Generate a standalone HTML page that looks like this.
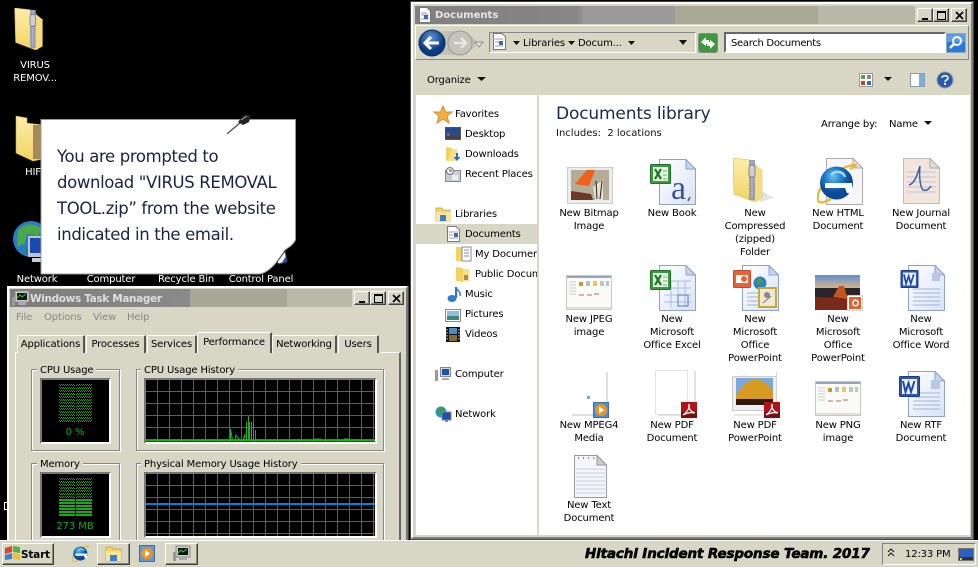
<!DOCTYPE html>
<html><head><meta charset="utf-8"><title>Documents</title>
<style>
html,body{margin:0;padding:0;background:#000;width:978px;height:567px;overflow:hidden}
body{position:relative;font:10px/13px "DejaVu Sans","Liberation Sans",sans-serif;color:#000;letter-spacing:-.14px}
div,span,svg{position:absolute;box-sizing:border-box}
svg{overflow:visible}
.t{white-space:nowrap}
.l{width:82px;text-align:center;line-height:13px}
.w{color:#fff;text-align:center;width:80px}
.btn{background:#d8d7c5;border:1px solid;border-color:#fff #404040 #404040 #fff;box-shadow:inset -1px -1px 0 #848484}
.b{width:16px;height:14px;background:#d8d7c5;border:1px solid;border-color:#fff #404040 #404040 #fff;box-shadow:inset -1px -1px 0 #848484}
.tab{background:#d8d7c5;border:1px solid #fff;border-right:2px solid #555;border-bottom:0;top:335px;height:18px;text-align:center;line-height:17px;border-radius:2px 2px 0 0}
.grp{border:1px solid #888;box-shadow:1px 1px 0 #fff,inset 1px 1px 0 #fff}
.cap{background:#d8d7c5;padding:0 3px;line-height:12px;white-space:nowrap}
.lcd{background:#000;border:2px solid;border-color:#777 #fff #fff #777}
.gr{background:#000;border:2px solid;border-color:#777 #fff #fff #777}
.g{color:#1aa81a;text-align:center;width:70px;left:40px;font-size:10px;letter-spacing:-.1px}
</style></head><body>
<svg width="0" height="0" style="left:0;top:0">
<defs>
<linearGradient id="doc" x1="0" y1="0" x2="1" y2="1"><stop offset="0" stop-color="#fff"/><stop offset="1" stop-color="#d8e2f6"/></linearGradient>
<linearGradient id="fo" x1="0" y1="0" x2="0" y2="1"><stop offset="0" stop-color="#fdeeaa"/><stop offset="1" stop-color="#f2d263"/></linearGradient>
<linearGradient id="sky" x1="0" y1="0" x2="0" y2="1"><stop offset="0" stop-color="#5d8fd0"/><stop offset="1" stop-color="#d6b28a"/></linearGradient>
<radialGradient id="ie" cx=".4" cy=".3"><stop offset="0" stop-color="#6cc4f0"/><stop offset=".55" stop-color="#1c78c8"/><stop offset="1" stop-color="#0a4a98"/></radialGradient>
<radialGradient id="bk" cx=".45" cy=".3"><stop offset="0" stop-color="#5e96d8"/><stop offset="1" stop-color="#0b3b80"/></radialGradient>
<pattern id="dot" width="2" height="3" patternUnits="userSpaceOnUse"><rect width="1" height="1" fill="#1aa01a"/><rect x="1" y="1" width="1" height="1" fill="#1aa01a"/></pattern>
<symbol id="d" viewBox="0 0 37 46"><path d="M.5 .5H27L36.5 10V45.5H.5Z" fill="url(#doc)" stroke="#8fa3c8"/><path d="M27 .5V10H36.5Z" fill="#c5d3ee" stroke="#8fa3c8"/></symbol>
<symbol id="zip" viewBox="0 0 30 44"><path d="M0 0L17 2V5L29 12V40L22 44L1 36Z" fill="url(#fo)" stroke="#d8b858" stroke-width=".6"/><path d="M22 6L29 12V40L22 44Z" fill="#f6dc7c"/><rect x="16" y="2" width="6" height="40" fill="#98a0ae"/><path d="M19 4V40" stroke="#d8dce4" stroke-dasharray="1 1"/><rect x="16" y="7" width="6" height="12" rx="2" fill="#c9ced8" stroke="#667" stroke-width=".7"/></symbol>
<symbol id="xl" viewBox="0 0 21 20"><rect x=".5" y=".5" width="20" height="19" rx="1" fill="#3a9a44" stroke="#1f6e2a"/><rect x="3" y="3" width="15" height="14" fill="#e8f5e0"/><path d="M5 5L11 15M11 5L5 15" stroke="#1d7a2a" stroke-width="2.2"/><path d="M13 7h4M13 11h4M13 15h4" stroke="#6ab06a"/></symbol>
<symbol id="wd" viewBox="0 0 21 21"><rect x=".5" y=".5" width="20" height="20" rx="1" fill="#2f55b0" stroke="#1c3a86"/><rect x="3" y="3" width="15" height="15" fill="#eef2fb"/><path d="M4 5L6.5 16L9.5 7L12 16L15.5 5" fill="none" stroke="#1f4aa8" stroke-width="2"/></symbol>
<symbol id="pdf" viewBox="0 0 16 16"><rect width="16" height="16" fill="#b01218"/><rect y="10" width="16" height="6" fill="#7d0c10"/><path d="M2 13C6 10 9 6 8 2C7 6 10 10 14 11C10 10 6 11 2 13Z" fill="none" stroke="#fff" stroke-width="1.2"/></symbol>
<symbol id="shot" viewBox="0 0 46 35"><rect x=".5" y=".5" width="45" height="34" fill="#fafaf6" stroke="#c8c8bc"/><rect x="1" y="1" width="44" height="2" fill="#98a4be"/><rect x="1" y="32" width="44" height="2" fill="#dde0d2"/><path d="M3 7h7M3 10h7M3 13h7M3 16h7M3 19h7" stroke="#ccc"/><rect x="13" y="7" width="4" height="4" fill="#c9953a"/><rect x="20" y="6" width="4" height="5" fill="#a8c2de"/><rect x="27" y="6" width="4" height="5" fill="#e8c85a"/><rect x="34" y="6" width="4" height="5" fill="#c4c4c4"/><rect x="40" y="6" width="3" height="5" fill="#a8cccc"/><path d="M13 20h5M21 20h5M28 19h5" stroke="#b66"/></symbol>
<symbol id="ppt" viewBox="0 0 16 16"><rect x=".5" y=".5" width="15" height="15" rx="1" fill="#fff" stroke="#d8d0c8"/><rect x="2" y="2" width="12" height="12" fill="#e0622c"/><circle cx="8.5" cy="8" r="3.5" fill="#fff"/><circle cx="8.5" cy="8" r="2" fill="#e0622c"/></symbol>
<symbol id="e" viewBox="0 0 40 42"><path d="M1 37C-2 28 14 8 32 3C36 2 39 1 39 3" fill="none" stroke="#e8b838" stroke-width="2.4"/><circle cx="19.500" cy="20" r="16.500" fill="url(#ie)"/><path d="M1 37C2 42 10 38 14 36" fill="none" stroke="#e8b838" stroke-width="2.4"/><path d="M8 20H35V25H8Z" fill="#fff"/><path d="M28 25H36L35 31L30 30Z" fill="#fff"/><path d="M14 12C18 7 26 8 28 14" fill="none" stroke="#a8dcf6" stroke-width="2.400"/><path d="M33 6C37 4 39 3 39 5" stroke="#e8b838" fill="none" stroke-width="2"/></symbol>
</defs></svg>

<!-- desktop -->
<svg style="left:14px;top:8px" width="30" height="42"><use href="#zip" width="30" height="42"/></svg>
<div class="w t" style="left:-5px;top:59px;line-height:13px">VIRUS<br>REMOV...</div>
<svg style="left:15px;top:115px" width="28" height="46" viewBox="0 0 28 46"><path d="M1 1L12 3V8L28 10V44L18 46L1 38Z" fill="url(#fo)" stroke="#c8a850" stroke-width=".6"/><rect x="18" y="10" width="10" height="34" fill="#a88a58"/></svg>
<div class="w t" style="left:-7px;top:166px">HIF</div>
<svg style="left:13px;top:221px" width="30" height="44" viewBox="0 0 30 44"><circle cx="18" cy="18" r="18" fill="#2a7cc8"/><path d="M5 10C11 1 24 2 28 8L25 15L14 13L12 22L4 26Z" fill="#4aa84a"/><path d="M12 26L22 30L18 36L12 32Z" fill="#2a8a3a"/><rect x="15" y="15" width="15" height="21" fill="#b8c4d8"/><rect x="17" y="17" width="13" height="15" fill="#1a4ab0"/><rect x="19" y="37" width="11" height="4" fill="#ccc"/></svg>
<div class="w t" style="left:-3px;top:273px">Network</div>
<div class="w t" style="left:71px;top:273px">Computer</div>
<div class="w t" style="left:146px;top:273px">Recycle Bin</div>
<div class="w t" style="left:221px;top:273px">Control Panel</div>
<div style="left:4px;top:502px;width:3px;height:8px;border:1px solid #fff;border-right:0"></div>

<!-- sticky note -->
<svg style="left:0;top:0" width="320" height="290">
<path d="M41 119.500H295.500V240C293 245 289 247 285 250C278 261 270 272 260 274H41Z" fill="#fff" stroke="#9a9a9a"/>
<path d="M277 262L285 251L287 261L279 264Z" fill="#fff" stroke="#444"/><path d="M281 264L286 256L287 262Z" fill="#2a50a0"/>
<path d="M227 134L241 122" stroke="#555" stroke-width="1.4"/><path d="M238 122L244 115H251L249 122L243 125Z" fill="#222"/><path d="M241 120L247 116" stroke="#aaa"/>
</svg>
<div class="t" id="note" style="left:57px;top:144px;font:16.5px/26px 'DejaVu Sans','Liberation Sans',sans-serif;color:#1c2340;letter-spacing:-.36px">You are prompted to<br>download "VIRUS REMOVAL<br>TOOL.zip” from the website<br>indicated in the email.</div>

<!-- Task Manager -->
<div style="left:7px;top:286px;width:401px;height:270px;background:#d8d7c5;border:2px solid #fff;border-right-color:#777;box-shadow:1px 0 0 #444"></div>
<div style="left:10px;top:289px;width:342px;height:18px;background:linear-gradient(90deg,#7c7c7c 0,#8a8a8a 180px,#a8a898 180px,#a8a898 277px,#b9b9aa 277px)"></div>
<svg style="left:12px;top:291px" width="17" height="15" viewBox="0 0 17 15"><rect x="3" y="0" width="14" height="11" fill="#ccc" stroke="#888"/><rect x="5" y="2" width="10" height="7" fill="#111"/><path d="M5 7L8 4L10 6L14 3" stroke="#3c3" fill="none"/><rect y="6" width="3" height="9" fill="#999"/><rect x="6" y="11" width="8" height="3" fill="#aaa"/></svg>
<div class="t" style="left:30px;top:292px;font-weight:bold;font-size:10.500px;line-height:15px;color:#dedede;letter-spacing:-.35px">Windows Task Manager</div>
<div class="b" style="left:354px;top:291px"><span style="left:4px;top:9px;width:6px;height:2px;background:#000"></span></div>
<div class="b" style="left:370px;top:291px"><span style="left:3px;top:2px;width:9px;height:9px;border:1px solid #000;border-top-width:2px"></span></div>
<div class="b" style="left:388px;top:291px"><svg style="left:3px;top:2px" width="9" height="9"><path d="M1 1L8 8M8 1L1 8" stroke="#000" stroke-width="1.6"/></svg></div>
<div class="t" style="left:16px;top:311px;color:#888">File</div>
<div class="t" style="left:44px;top:311px;color:#888">Options</div>
<div class="t" style="left:93px;top:311px;color:#888">View</div>
<div class="t" style="left:127px;top:311px;color:#888">Help</div>
<div style="left:15px;top:352px;width:386px;height:200px;border:1px solid #fff;border-right:2px solid #666"></div>
<div class="tab" style="left:17px;width:68px">Applications</div>
<div class="tab" style="left:86px;width:60px">Processes</div>
<div class="tab" style="left:147px;width:50px">Services</div>
<div class="tab" style="left:272px;width:65px">Networking</div>
<div class="tab" style="left:338px;width:41px">Users</div>
<div class="tab" style="left:197px;width:75px;top:332px;height:21px;line-height:20px">Performance</div>

<div class="grp" style="left:31px;top:369px;width:89px;height:82px"></div><div class="cap" style="left:37px;top:365px">CPU Usage</div>
<div class="lcd" style="left:40px;top:378px;width:71px;height:66px"></div>
<svg style="left:59px;top:384px" width="34" height="39"><rect width="16" height="39" fill="url(#dot)"/><rect x="17" width="16" height="39" fill="url(#dot)"/></svg>
<div class="g t" style="top:426px">0 %</div>

<div class="grp" style="left:136px;top:369px;width:248px;height:82px"></div><div class="cap" style="left:141px;top:365px">CPU Usage History</div>
<div class="gr" style="left:144px;top:378px;width:233px;height:66px"></div>
<svg style="left:146px;top:380px" width="229" height="62"><path d="M11.500 0V62M23.500 0V62M35.500 0V62M47.500 0V62M59.500 0V62M71.500 0V62M83.500 0V62M95.500 0V62M107.500 0V62M119.500 0V62M131.500 0V62M143.500 0V62M155.500 0V62M167.500 0V62M179.500 0V62M191.500 0V62M203.500 0V62M215.500 0V62M227.500 0V62M0 11.500H229M0 23.500H229M0 35.500H229M0 47.500H229M0 59.500H229" stroke="#0a8a4c" fill="none"/><path d="M0 60.500H229" stroke="#1db01d" stroke-width="2" fill="none"/><path d="M84.500 60V49L86.500 60M89 60L90 55L92 58L94 60M97 60L99 54V60M100.500 60V42M102.500 60V36V60M103.500 60V42M105.500 60V42V60M107.500 60V42V60M109.500 60V50V60M168 59H175M198 59H204" stroke="#1db01d" fill="none"/></svg>

<div class="grp" style="left:31px;top:463px;width:89px;height:90px"></div><div class="cap" style="left:37px;top:459px">Memory</div>
<div class="lcd" style="left:40px;top:472px;width:71px;height:66px"></div>
<svg style="left:59px;top:478px" width="34" height="40"><rect width="16" height="21" fill="url(#dot)"/><rect x="17" width="16" height="21" fill="url(#dot)"/><path d="M0 22H33M0 25H33M0 28H33M0 31H33M0 34H33M0 37H33" stroke="#1aa81a" stroke-width="2"/><rect x="16" y="21" width="1" height="18" fill="#000"/></svg>
<div class="g t" style="top:520px">273 MB</div>

<div class="grp" style="left:136px;top:463px;width:248px;height:90px"></div><div class="cap" style="left:141px;top:459px">Physical Memory Usage History</div>
<div class="gr" style="left:144px;top:472px;width:233px;height:66px"></div>
<svg style="left:146px;top:474px" width="229" height="62"><path d="M11.500 0V62M23.500 0V62M35.500 0V62M47.500 0V62M59.500 0V62M71.500 0V62M83.500 0V62M95.500 0V62M107.500 0V62M119.500 0V62M131.500 0V62M143.500 0V62M155.500 0V62M167.500 0V62M179.500 0V62M191.500 0V62M203.500 0V62M215.500 0V62M227.500 0V62M0 11.500H229M0 23.500H229M0 35.500H229M0 47.500H229M0 59.500H229" stroke="#0a8a4c" fill="none"/><rect y="29" width="229" height="2" fill="#0f7fd6"/></svg>

<!-- Explorer -->
<div style="left:411px;top:2px;width:562px;height:537px;background:#d8d7c5;border:2px solid #fff;border-right-color:#808080;border-bottom-color:#808080;box-shadow:0 0 0 1px #444"></div>
<div style="left:415px;top:6px;width:500px;height:18px;background:linear-gradient(90deg,#808080 0,#868686 162px,#9a9a9a 169px,#9a9a9a 260px,#aaa998 260px,#aaa998 403px,#b8b8a9 403px)"></div>
<svg style="left:419px;top:7px" width="12" height="16"><path d="M.5 .5H8L11.500 4V15.500H.5Z" fill="#fff" stroke="#777"/><path d="M2 6h6M2 8h8M2 12h8" stroke="#99b"/><rect x="5" y="8" width="4" height="4" fill="#3a6ab0"/></svg>
<div class="t" style="left:435px;top:8px;font-weight:bold;font-size:10px;line-height:15px;color:#e6e6e6;letter-spacing:0">Documents</div>
<div class="b" style="left:917px;top:8px"><span style="left:4px;top:9px;width:6px;height:2px;background:#000"></span></div>
<div class="b" style="left:933px;top:8px"><span style="left:3px;top:2px;width:9px;height:9px;border:1px solid #000;border-top-width:2px"></span></div>
<div class="b" style="left:951px;top:8px"><svg style="left:3px;top:2px" width="9" height="9"><path d="M1 1L8 8M8 1L1 8" stroke="#000" stroke-width="1.6"/></svg></div>

<div style="left:415px;top:25px;width:554px;height:35px;border:1px solid;border-color:#fff #888 #888 #fff"></div>
<svg style="left:416px;top:28px" width="80" height="30">
<ellipse cx="32" cy="15" rx="28" ry="12" fill="#c2c2b4"/>
<circle cx="44" cy="15" r="12" fill="#c4c4bc" stroke="#999"/><path d="M38 15H50M45 10L50 15L45 20" fill="none" stroke="#e8e8e2" stroke-width="2.4"/>
<circle cx="16" cy="15" r="13" fill="url(#bk)" stroke="#0a2c60"/><path d="M23 15H10M15 9L9 15L15 21" fill="none" stroke="#fff" stroke-width="3"/>
<path d="M59 14H67L63 19Z" fill="#e8e8e0" stroke="#777" stroke-width=".7"/>
</svg>
<div style="left:489px;top:32px;width:207px;height:21px;border:1px solid;border-color:#888 #fff #fff #888"></div>
<svg style="left:493px;top:33px" width="13" height="17"><path d="M.5 .5H9L12.500 4V16.500H.5Z" fill="#fff" stroke="#777"/><path d="M2 6h8M2 9h8M2 13h8" stroke="#99b"/><rect x="6" y="8" width="4" height="4" fill="#3a6ab0"/></svg>
<svg style="left:513px;top:40px" width="180" height="6"><path d="M0 1H7L3.500 5ZM55 1H62L58.500 5ZM115 1H122L118.500 5ZM166 0H174L170 5Z" fill="#111"/></svg>
<div class="t" style="left:523px;top:37px">Libraries</div>
<div class="t" style="left:578px;top:37px">Docum...</div>
<svg style="left:698px;top:33px" width="20" height="20"><rect x=".5" y=".5" width="19" height="19" rx="2" fill="#3c9a3c" stroke="#888"/><path d="M3 9L8 4V7H11V11H8V13ZM17 11L12 16V13H9V9H12V7Z" fill="#fff"/></svg>
<div style="left:724px;top:32px;width:222px;height:21px;background:#fff;border:2px solid;border-color:#666 #fff #fff #666"></div>
<div class="t" style="left:731px;top:37px;letter-spacing:-.3px">Search Documents</div>
<svg style="left:946px;top:33px" width="20" height="20"><rect x=".5" y=".5" width="19" height="19" fill="#2a78d8" stroke="#8ab"/><rect x="1" y="1" width="18" height="8" fill="#5a9ce8"/><circle cx="11" cy="8" r="4" fill="none" stroke="#fff" stroke-width="2"/><path d="M8 11L4 15" stroke="#fff" stroke-width="2.4"/></svg>

<div class="t" style="left:427px;top:74px">Organize</div>
<svg style="left:477px;top:76px" width="10" height="6"><path d="M0 1H9L4.500 5Z" fill="#111"/></svg>
<svg style="left:859px;top:71px" width="100" height="18"><rect x=".5" y="2.500" width="13" height="13" fill="#fff" stroke="#999"/><rect x="2" y="4" width="4" height="4" fill="#5a9a5a"/><rect x="8" y="4" width="4" height="4" fill="#888"/><rect x="2" y="10" width="4" height="4" fill="#c04030"/><rect x="8" y="10" width="4" height="4" fill="#3a6ab0"/><path d="M25 6H33L29 10Z" fill="#111"/><rect x="51.500" y="2.500" width="14" height="13" fill="#fff" stroke="#8899aa"/><rect x="60" y="3" width="5" height="12" fill="#7ab0e0"/><circle cx="86" cy="9" r="8" fill="#2a5ab0" stroke="#999"/><path d="M83 7C83 4 89 4 89 7C89 9 86 9 86 11" fill="none" stroke="#fff" stroke-width="1.6"/><rect x="85" y="12" width="2" height="2" fill="#fff"/></svg>

<!-- nav pane -->
<div style="left:416px;top:95px;width:121px;height:440px;background:#fff"></div>
<div style="left:539px;top:95px;width:431px;height:440px;background:#fff"></div>
<div style="left:416px;top:224px;width:121px;height:20px;background:#d8d7c5"></div>
<div class="t" style="left:455px;top:108px">Favorites</div>
<div class="t" style="left:465px;top:128px">Desktop</div>
<div class="t" style="left:465px;top:148px">Downloads</div>
<div class="t" style="left:465px;top:168px">Recent Places</div>
<div class="t" style="left:455px;top:208px">Libraries</div>
<div class="t" style="left:465px;top:228px">Documents</div>
<div style="left:475px;top:248px;width:62px;height:13px;overflow:hidden;white-space:nowrap">My Documents</div>
<div style="left:475px;top:268px;width:62px;height:13px;overflow:hidden;white-space:nowrap">Public Documents</div>
<div class="t" style="left:465px;top:288px">Music</div>
<div class="t" style="left:465px;top:308px">Pictures</div>
<div class="t" style="left:465px;top:328px">Videos</div>
<div class="t" style="left:455px;top:368px">Computer</div>
<div class="t" style="left:455px;top:408px">Network</div>
<svg style="left:434px;top:105px" width="20" height="20"><path d="M9 1L11.500 7H18L13 11L15 18L9 14L3 18L5 11L0 7H6.500Z" fill="#f6b040" stroke="#d88a30"/></svg>
<svg style="left:445px;top:127px" width="16" height="13"><rect x=".5" y=".5" width="15" height="12" fill="#2a4a90" stroke="#555"/><rect x="1" y="9" width="14" height="3" fill="#444"/><rect x="2" y="6" width="3" height="3" fill="#c44"/></svg>
<svg style="left:445px;top:146px" width="16" height="16"><path d="M1 1L7 2V14L1 15Z" fill="#f2d263"/><path d="M7 3H12V15H3" fill="#f7e08a"/><path d="M11 7V11H8.500L12 15L15.500 11H13V7Z" fill="#2a6ad0"/></svg>
<svg style="left:445px;top:167px" width="16" height="15"><rect x=".5" y="3.500" width="15" height="11" fill="#c8cfd8" stroke="#888"/><circle cx="5" cy="4" r="3.500" fill="#eee" stroke="#777"/><path d="M5 2V4H7" stroke="#555" fill="none"/><rect x="7" y="8" width="6" height="5" fill="#eee"/></svg>
<svg style="left:435px;top:207px" width="16" height="15"><path d="M1 1H7L8 3H15V14H1Z" fill="#f2d263" stroke="#c8a040" stroke-width=".8"/><rect x="1" y="5" width="14" height="9" fill="#f9e598"/><rect x="5" y="8" width="6" height="6" fill="#3a80d0"/></svg>
<svg style="left:447px;top:226px" width="13" height="16"><path d="M.5 .5H9L12.500 4V15.500H.5Z" fill="#fff" stroke="#778"/><path d="M2 6h9M2 9h4M2 12h9" stroke="#99b"/><rect x="7" y="7" width="4" height="4" fill="#3a6ab0"/></svg>
<svg style="left:456px;top:246px" width="15" height="16"><path d="M0 1H8V15H0Z" fill="#f2d263"/><rect x="6" y="1" width="9" height="14" fill="#fff" stroke="#889"/><path d="M8 4h5M8 7h5M8 10h5" stroke="#889"/></svg>
<svg style="left:456px;top:266px" width="14" height="16"><path d="M0 1L7 2V16L0 15Z" fill="#f2d263"/><path d="M7 3H13V15H7Z" fill="#f7e08a"/><rect x="8" y="9" width="4" height="5" fill="#c08050"/></svg>
<svg style="left:447px;top:286px" width="14" height="16"><path d="M9 1V12" stroke="#2a70d0" stroke-width="2"/><ellipse cx="5" cy="12.500" rx="4.500" ry="3.500" fill="#2a80d8"/><path d="M9 1C10 5 14 5 13 10" fill="none" stroke="#2a70d0" stroke-width="1.400"/></svg>
<svg style="left:445px;top:309px" width="16" height="13"><rect x=".5" y=".5" width="15" height="12" fill="#fff" stroke="#888"/><rect x="2" y="2" width="12" height="5" fill="#8cc0e8"/><rect x="2" y="7" width="12" height="4" fill="#3a8a70"/></svg>
<svg style="left:446px;top:327px" width="14" height="15"><rect width="14" height="15" fill="#111"/><rect x="3" y="1" width="8" height="6" fill="#4a90c8"/><rect x="3" y="8" width="8" height="6" fill="#8a6a30"/><path d="M1 2v11M13 2v11" stroke="#ddd" stroke-dasharray="1.500 1.500"/></svg>
<svg style="left:435px;top:367px" width="16" height="15"><rect x="5.500" y=".5" width="10" height="9" fill="#d8d8d8" stroke="#888"/><rect x="7" y="2" width="7" height="6" fill="#1a50b0"/><rect y="3" width="3" height="11" fill="#999"/><rect x="7" y="11" width="7" height="2" fill="#aaa"/></svg>
<svg style="left:435px;top:406px" width="16" height="16"><circle cx="6" cy="6" r="5.500" fill="#2a90d0"/><path d="M2 4L7 1L10 4L6 6L3 9Z" fill="#3aa040"/><rect x="7" y="6" width="9" height="8" fill="#1a50b0" stroke="#888"/><rect x="10" y="14" width="3" height="2" fill="#888"/></svg>

<!-- content header -->
<div class="t" style="left:556px;top:103px;font-size:17px;line-height:22px;color:#1a2a44;letter-spacing:-.15px">Documents library</div>
<div class="t" style="left:556px;top:127px;color:#111;letter-spacing:0">Includes:&nbsp; 2 locations</div>
<div class="t" style="left:821px;top:118px">Arrange by:</div>
<div class="t" style="left:889px;top:118px">Name</div>
<svg style="left:924px;top:121px" width="10" height="6"><path d="M0 0H8L4 4Z" fill="#111"/></svg>

<!-- files -->
<svg style="left:567px;top:167px" width="46" height="38" viewBox="0 0 46 38"><rect x=".5" y=".5" width="45" height="36" fill="#ececec" stroke="#ccc"/><rect x="4" y="3" width="38" height="30" fill="#b4ac96"/><path d="M8 17L20 3H28L22 19Z" fill="#f0601c"/><path d="M4 24L24 27L26 33H4Z" fill="#6a3a2a"/><path d="M26 20L36 13L36 33H28Z" fill="#e8e0d0"/><path d="M29 14L30 32M35 14L33 32" stroke="#222"/></svg>
<svg style="left:659px;top:159px" width="37" height="46"><use href="#d" width="37" height="46"/></svg>
<svg style="left:650px;top:164px" width="21" height="20"><use href="#xl" width="21" height="20"/></svg>
<svg style="left:659px;top:159px" width="37" height="46"><text x="12" y="40" font-family="'Liberation Serif',serif" font-size="34" fill="#3a5590">a</text><path d="M31 38L29 42" stroke="#3a5590" stroke-width="1.400"/></svg>
<svg style="left:760px;top:190px" width="14" height="12"><path d="M0 0L14 8L0 12Z" fill="#e4e4e4"/></svg>
<svg style="left:733px;top:158px" width="30" height="44"><use href="#zip" width="30" height="44"/></svg>
<svg style="left:826px;top:158px" width="37" height="47"><path d="M.5 .5H27L36.500 10V46.500H.5Z" fill="#f6f6f6" stroke="#aaa"/><path d="M27 .5V10H36.500Z" fill="#e4e4e4" stroke="#aaa"/></svg>
<svg style="left:817px;top:163px" width="40" height="42"><use href="#e" width="40" height="42"/></svg>
<svg style="left:903px;top:158px" width="37" height="46"><path d="M.5 .5H27L36.500 10V45.500H.5Z" fill="#f3e4dc" stroke="#bbb"/><path d="M4 14H33M4 19H33M4 24H33M4 29H33M4 34H33" stroke="#b8c4e0"/><path d="M27 .5V10H36.500Z" fill="#ddd" stroke="#aaa"/><path d="M6 27C11 26 14 18 17 8C16 18 17 29 20 32C24 33 26 31 28 28" fill="none" stroke="#3a5a9a" stroke-width="1.400"/></svg>

<svg style="left:566px;top:275px" width="46" height="35"><use href="#shot" width="46" height="35"/></svg>
<svg style="left:659px;top:265px" width="37" height="46"><use href="#d" width="37" height="46"/><path d="M5 16H32M5 23H32M5 30H32M5 37H32M12 16V42M19 16V42M26 16V42" stroke="#aabde0"/><rect x="19" y="30" width="10" height="11" fill="none" stroke="#5a78b8"/></svg>
<svg style="left:650px;top:270px" width="21" height="20"><use href="#xl" width="21" height="20"/></svg>
<svg style="left:742px;top:265px" width="37" height="46"><use href="#d" width="37" height="46"/><path d="M5 28H20M5 32H20M5 36H20M5 40H20" stroke="#a0b4dc"/></svg>
<svg style="left:733px;top:270px" width="18" height="18"><rect x=".5" y=".5" width="17" height="17" rx="1" fill="#e8633a" stroke="#c24a24"/><rect x="3" y="5" width="12" height="8" fill="#fff"/><circle cx="11" cy="9" r="3" fill="#e8633a"/></svg>
<svg style="left:753px;top:276px" width="14" height="14"><circle cx="7" cy="7" r="6.500" fill="#2a80c8"/><path d="M3 4L8 2L10 6L5 9Z" fill="#4aa040"/></svg>
<svg style="left:758px;top:287px" width="19" height="21"><rect x="1" y="1" width="17" height="19" fill="#efe8d8" stroke="#c8a838" stroke-width="2"/><circle cx="9" cy="8" r="3" fill="#888"/><path d="M5 16L13 9" stroke="#777"/></svg>
<svg style="left:815px;top:275px" width="46" height="36" viewBox="0 0 46 36"><rect width="45" height="35" fill="#28242a"/><rect width="45" height="13" fill="url(#sky)"/><path d="M0 22L45 24V35H0Z" fill="#7a2a1a"/><path d="M18 22L24 11H29L33 24Z" fill="#c2561e"/></svg>
<svg style="left:847px;top:295px" width="16" height="16"><use href="#ppt" width="16" height="16"/></svg>
<svg style="left:908px;top:265px" width="37" height="46"><use href="#d" width="37" height="46"/><path d="M5 24H32M5 28H32M5 32H32M5 36H32M5 40H32" stroke="#a0b4dc"/><rect x="24" y="8" width="8" height="8" fill="#b8c8e4"/></svg>
<svg style="left:899px;top:270px" width="21" height="18"><use href="#wd" width="21" height="18" preserveAspectRatio="none"/></svg>

<svg style="left:572px;top:372px" width="36" height="44"><path d="M35 0V43H0" fill="none" stroke="#d4d4ce" stroke-width="1.500"/><rect x="15" y="24" width="3" height="3" fill="#7ac"/></svg>
<svg style="left:593px;top:402px" width="16" height="16"><rect x=".5" y=".5" width="15" height="15" fill="#4a90d8" stroke="#3a70b0"/><circle cx="8" cy="8" r="6" fill="#e8962a"/><path d="M6 4.500L11 8L6 11.500Z" fill="#fff"/></svg>
<svg style="left:655px;top:370px" width="41" height="46"><rect x=".5" y=".5" width="32" height="44" fill="#fff" stroke="#e4e4dc"/><path d="M40 1V45H3" fill="none" stroke="#dadad4" stroke-width="1.500"/></svg>
<svg style="left:681px;top:402px" width="16" height="16"><use href="#pdf" width="16" height="16"/></svg>
<svg style="left:732px;top:372px" width="46" height="44"><rect x=".5" y="4.500" width="44" height="34" fill="#eee" stroke="#ccc"/><rect x="4" y="6" width="37" height="27" fill="#7aa8d8"/><path d="M4 24C10 14 16 6 27 8C33 10 38 14 41 20V33H4Z" fill="#d89a20"/><rect x="4" y="27" width="37" height="6" fill="#2a1a10"/><path d="M44.500 0V43H2" fill="none" stroke="#d4d4ce"/></svg>
<svg style="left:764px;top:402px" width="16" height="16"><use href="#pdf" width="16" height="16"/></svg>
<svg style="left:815px;top:381px" width="46" height="35"><use href="#shot" width="46" height="35"/></svg>
<svg style="left:908px;top:371px" width="37" height="46"><use href="#d" width="37" height="46"/><path d="M5 22H32M5 26H32M5 30H32M5 34H32M5 38H32" stroke="#a0b4dc"/><rect x="23" y="9" width="9" height="9" fill="#b8c8e4"/></svg>
<svg style="left:899px;top:376px" width="21" height="21"><use href="#wd" width="21" height="21"/></svg>
<svg style="left:574px;top:455px" width="33" height="43"><path d="M.5 .5H23L32.500 10V42.500H.5Z" fill="#f4f5fa" stroke="#9a9aa4"/><path d="M23 .5V10H32.500Z" fill="#ccc" stroke="#999"/><path d="M2 14H31M2 18H31M2 22H31M2 26H31M2 30H31M2 34H31M2 38H31" stroke="#c8cfe4"/><path d="M4 3h1M9 3h1M14 3h1M19 3h1" stroke="#888" stroke-width="2"/></svg>

<div class="l" style="left:548px;top:207px">New Bitmap<br>Image</div>
<div class="l" style="left:631px;top:207px">New Book</div>
<div class="l" style="left:714px;top:207px">New<br>Compressed<br>(zipped)<br>Folder</div>
<div class="l" style="left:797px;top:207px">New HTML<br>Document</div>
<div class="l" style="left:880px;top:207px">New Journal<br>Document</div>
<div class="l" style="left:548px;top:313px">New JPEG<br>image</div>
<div class="l" style="left:631px;top:313px">New<br>Microsoft<br>Office Excel</div>
<div class="l" style="left:714px;top:313px">New<br>Microsoft<br>Office<br>PowerPoint</div>
<div class="l" style="left:797px;top:313px">New<br>Microsoft<br>Office<br>PowerPoint</div>
<div class="l" style="left:880px;top:313px">New<br>Microsoft<br>Office Word</div>
<div class="l" style="left:548px;top:419px">New MPEG4<br>Media</div>
<div class="l" style="left:631px;top:419px">New PDF<br>Document</div>
<div class="l" style="left:714px;top:419px">New PDF<br>PowerPoint</div>
<div class="l" style="left:797px;top:419px">New PNG<br>image</div>
<div class="l" style="left:880px;top:419px">New RTF<br>Document</div>
<div class="l" style="left:548px;top:499px">New Text<br>Document</div>

<!-- taskbar -->
<div style="left:0;top:540px;width:978px;height:27px;background:#d8d7c5;border-top:1px solid #fff"></div>
<div class="btn" style="left:2px;top:543px;width:52px;height:22px"></div>
<svg style="left:4px;top:544px" width="17" height="18"><path d="M1 4L8 2V8L1 10Z" fill="#e0452a"/><path d="M9 2L16 3V9L9 8Z" fill="#5ab040"/><path d="M1 11L8 9V15L1 16Z" fill="#3a80d8"/><path d="M9 9L16 10V16L9 15Z" fill="#f0c030"/></svg>
<div class="t" style="left:21px;top:548px;font-weight:bold;font-size:10.500px;line-height:14px;letter-spacing:-.2px">Start</div>
<svg style="left:72px;top:545px" width="17" height="18"><use href="#e" width="17" height="18"/></svg>
<div class="btn" style="left:97px;top:543px;width:33px;height:22px"></div>
<svg style="left:105px;top:546px" width="17" height="16"><path d="M1 1H7L8 3H16V15H1Z" fill="#f2d263" stroke="#c8a040" stroke-width=".8"/><rect x="1" y="5" width="15" height="10" fill="#f9e598"/><rect x="5" y="9" width="7" height="6" fill="#3a80d0"/></svg>
<svg style="left:139px;top:545px" width="16" height="17"><rect x=".5" y=".5" width="15" height="16" fill="#5a98e0" stroke="#3a70b0"/><circle cx="8" cy="8.500" r="6" fill="#e8962a"/><path d="M6 5L11 8.500L6 12Z" fill="#fff"/></svg>
<div class="btn" style="left:165px;top:543px;width:33px;height:22px"></div>
<svg style="left:173px;top:546px" width="17" height="15" viewBox="0 0 17 15"><rect x="3" y="0" width="14" height="11" fill="#ccc" stroke="#888"/><rect x="5" y="2" width="10" height="7" fill="#111"/><path d="M5 7L8 4L10 6L14 3" stroke="#3c3" fill="none"/><rect y="6" width="3" height="9" fill="#999"/><rect x="6" y="11" width="8" height="3" fill="#aaa"/></svg>
<div class="t" style="left:585px;top:546px;font:italic bold 13.500px/16px 'DejaVu Sans','Liberation Sans',sans-serif;letter-spacing:-.14px;-webkit-text-stroke:.6px #000">Hitachi Incident Response Team. 2017</div>
<div style="left:882px;top:543px;width:94px;height:22px;border:1px solid;border-color:#808080 #fff #fff #808080"></div>
<svg style="left:887px;top:548px" width="9" height="10"><path d="M1 4L4 1L7 4M1 8L4 5L7 8" fill="none" stroke="#111"/></svg>
<div class="t" style="left:905px;top:548px">12:33 PM</div>
<svg style="left:958px;top:548px" width="16" height="14"><rect x=".5" y=".5" width="15" height="12" fill="#2a60c0" stroke="#777"/><rect x="1" y="9" width="14" height="3" fill="#333"/><rect x="2" y="10" width="2" height="2" fill="#ec3"/></svg>
</body></html>
